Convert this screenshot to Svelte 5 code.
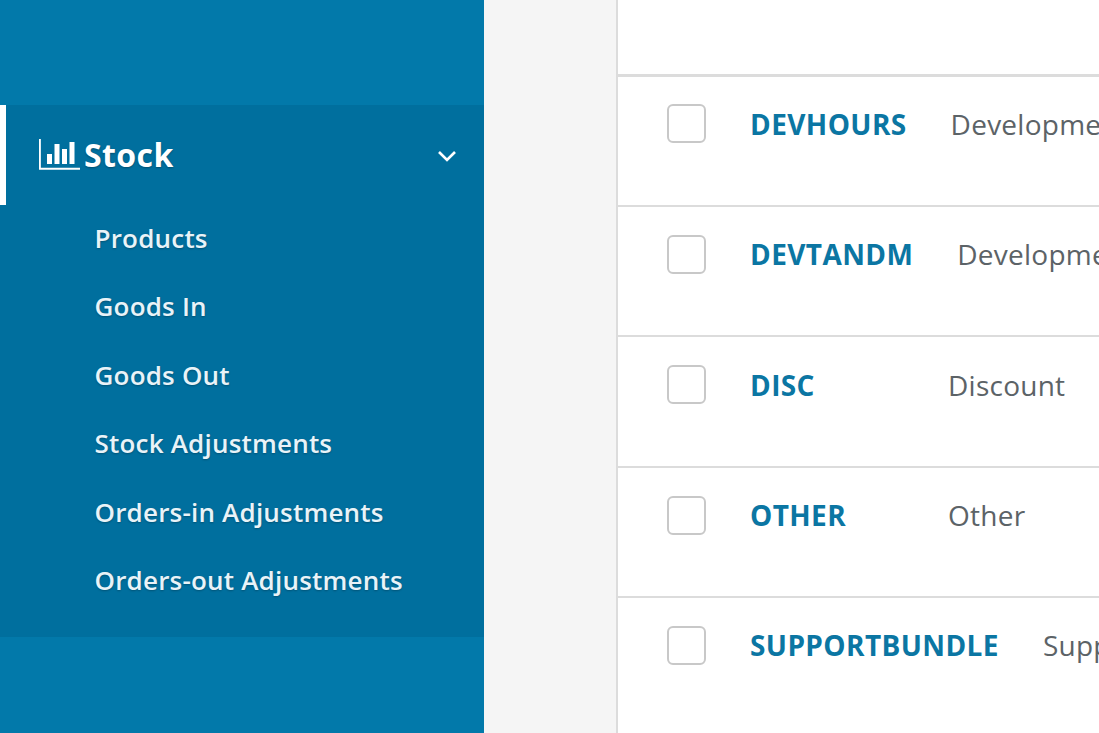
<script>
  const links = ['Products', 'Goods In', 'Goods Out', 'Stock Adjustments', 'Orders-in Adjustments', 'Orders-out Adjustments'];
  const rows = [
    { code: 'DEVHOURS', name: 'Development hours' },
    { code: 'DEVTANDM', name: 'Development T&M' },
    { code: 'DISC', name: 'Discount' },
    { code: 'OTHER', name: 'Other' },
    { code: 'SUPPORTBUNDLE', name: 'Support bundle' }
  ];
</script>

<div class="page">
  <aside class="sidebar">
    <section class="group">
      <div class="head">
        <svg class="chart" width="41" height="32" viewBox="0 0 41 32" fill="none" aria-hidden="true">
          <path d="M0.9 1V30.7H41" stroke="#fff" stroke-width="1.9" />
          <path d="M8 16H13V26H8ZM15.5 6H20.5V26H15.5ZM23 11H28V26H23ZM30.5 4H35.5V26H30.5Z" fill="#fff" />
        </svg>
        <span class="title">Stock</span>
        <svg class="chev" width="20" height="12" viewBox="0 0 20 12" fill="none" aria-hidden="true">
          <path d="M2 2L10 10L18 2" stroke="#fff" stroke-width="2.6" />
        </svg>
      </div>
      <ul class="links">
        {#each links as link}
          <li>{link}</li>
        {/each}
      </ul>
    </section>
  </aside>
  <div class="gutter"></div>
  <main class="panel">
    <div class="top"></div>
    {#each rows as row}
      <div class="row">
        <span class="check"></span>
        <span class="code">{row.code}</span>
        <span class="name">{row.name}</span>
      </div>
    {/each}
  </main>
</div>

<style>
  :global(body) {
    margin: 0;
    overflow: hidden;
  }
  .page {
    display: flex;
    width: 1099px;
    height: 733px;
    overflow: hidden;
    font-family: "Open Sans", sans-serif;
  }
  .sidebar {
    flex: 0 0 484px;
    background: #0279aa;
    padding-top: 105px;
    box-sizing: border-box;
  }
  .group {
    background: #006f9e;
    height: 532px;
  }
  .head {
    display: flex;
    align-items: center;
    height: 100px;
    box-sizing: border-box;
    border-left: 6px solid #fff;
    padding-left: 33px;
    padding-right: 27px;
    color: #fff;
  }
  .chart {
    flex: none;
    margin-right: 4px;
    margin-top: -2px;
  }
  .title {
    font-size: 32px;
    line-height: 42px;
    font-weight: 700;
    letter-spacing: 0.4px;
    text-shadow: 0 1px 2px rgba(0, 0, 0, 0.3);
  }
  .chev {
    margin-left: auto;
    margin-top: 2px;
  }
  .links {
    list-style: none;
    margin: -1px 0 0;
    padding: 0 0 0 94.5px;
  }
  .links li {
    height: 68.4px;
    line-height: 68.4px;
    font-size: 26px;
    font-weight: 600;
    letter-spacing: 0.2px;
    color: #e9f3f8;
    text-shadow: 0 1px 2px rgba(0, 0, 0, 0.25);
    white-space: nowrap;
  }
  .gutter {
    flex: 0 0 132px;
    background: #f5f5f5;
  }
  .panel {
    flex: 1;
    min-width: 0;
    background: #fff;
    border-left: 2px solid #dcdcdc;
    overflow: hidden;
  }
  .top {
    height: 74px;
    border-bottom: 3px solid #dcdcdc;
  }
  .row {
    display: flex;
    align-items: flex-start;
    height: 128px;
    border-bottom: 2px solid #dcdcdc;
    margin-bottom: 0.4px;
    padding-left: 49px;
    white-space: nowrap;
  }
  .row:last-child {
    border-bottom: 0;
  }
  .check {
    flex: none;
    width: 35px;
    height: 35px;
    margin-top: 27.45px;
    margin-right: 44px;
    border: 2px solid #c8c8c8;
    border-radius: 6px;
  }
  .code {
    flex: none;
    min-width: 154px;
    margin-top: 25.9px;
    margin-right: 44px;
    font-size: 28px;
    line-height: 42px;
    font-weight: 700;
    letter-spacing: 0.4px;
    color: #0b76a3;
  }
  .name {
    margin-top: 25.9px;
    font-size: 28px;
    line-height: 42px;
    letter-spacing: 0.25px;
    color: #5c6367;
  }
</style>
